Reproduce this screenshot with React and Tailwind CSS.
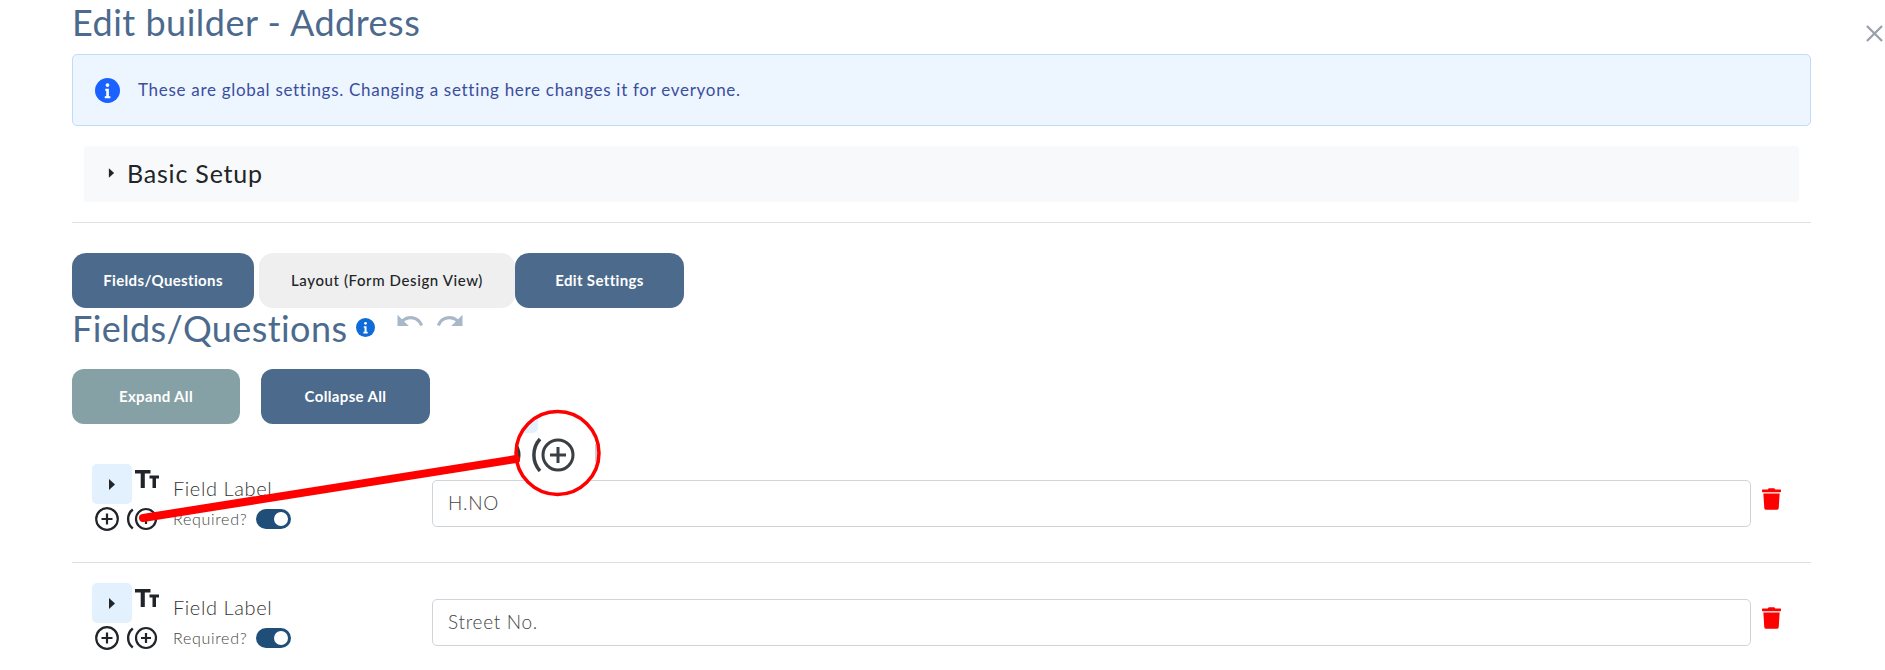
import { FaTrash } from "react-icons/fa";
import { MdUndo, MdRedo } from "react-icons/md";

const FONT = "font-['Lato','Noto_Sans',sans-serif]";

function InfoDot({ className }) {
  return (
    <svg viewBox="0 0 20 20" className={className}>
      <circle cx="10" cy="10" r="10" fill="currentColor" />
      <circle cx="10" cy="5.6" r="1.5" fill="#fff" />
      <path d="M8.2 8.6h2.9v6h1.2v1.6H7.8v-1.6h1.2v-4.400H8.200z" fill="#fff" />
    </svg>
  );
}

function Caret({ className }) {
  return (
    <svg viewBox="0 0 8 12" className={className}>
      <path d="M1 0.500L7 6L1 11.500z" fill="currentColor" />
    </svg>
  );
}

function TextSizeIcon() {
  return (
    <svg viewBox="0 0 24 18" className="w-6 h-[18px] text-[#212529] ml-[3px] mt-[6px] shrink-0">
      <path fill="currentColor" d="M0 0h15.500v3.500H9.800V18H5.700V3.500H0z" />
      <path fill="currentColor" d="M14.500 5.500H24v3h-3V18h-3.500V8.500h-3z" />
    </svg>
  );
}

function PlusCircle() {
  return (
    <svg viewBox="0 0 24 24" className="w-6 h-6 text-[#212529] shrink-0 ml-[3px]">
      <circle cx="12" cy="12" r="10.800" fill="none" stroke="currentColor" strokeWidth="2.200" />
      <path d="M12 6.500v11M6.500 12h11" fill="none" stroke="currentColor" strokeWidth="2.200" />
    </svg>
  );
}

function PlusRipple() {
  return (
    <svg viewBox="0 0 32 24" className="w-8 h-6 text-[#212529] shrink-0 ml-[7px]">
      <path d="M6.800 2.500 A12 12 0 0 0 6.800 21.500" fill="none" stroke="currentColor" strokeWidth="2.400" />
      <circle cx="20" cy="12" r="10" fill="none" stroke="currentColor" strokeWidth="2.200" />
      <path d="M20 7v10M15 12h10" fill="none" stroke="currentColor" strokeWidth="2.200" />
    </svg>
  );
}

function FieldRow({ placeholder }) {
  return (
    <div className="flex h-[98px]">
      <div className="w-[360px] pl-5 shrink-0">
        <div className="flex">
          <div className="w-10 h-10 rounded-[5px] bg-[#e3f0fd] flex items-center justify-center text-[#212529]">
            <Caret className="w-[8px] h-[13px]" />
          </div>
          <TextSizeIcon />
          <span className="ml-[14px] mt-[13px] text-[20px] leading-[22px] text-[#333] font-light tracking-[0.6px]">Field Label</span>
        </div>
        <div className="flex items-center mt-[3px] h-6">
          <PlusCircle />
          <PlusRipple />
          <span className="ml-[15px] text-[16px] leading-5 text-[#444] font-light tracking-[0.7px]">Required?</span>
          <div className="ml-[9px] w-[35px] h-5 rounded-full bg-[#1f4e79] flex items-center justify-end pr-[3px]">
            <div className="w-[14px] h-[14px] rounded-full bg-white" />
          </div>
        </div>
      </div>
      <div className="flex-1 mt-4 h-[47px] border border-[#ced4da] rounded-[5px] flex items-center px-[15px] text-[19px] text-[#444] font-light tracking-[0.7px]">
        {placeholder}
      </div>
      <div className="w-[60px] pl-[11px] pt-6 shrink-0">
        <FaTrash className="w-[19px] h-[22px] text-[#ff0000]" />
      </div>
    </div>
  );
}

function Callout() {
  return (
    <svg viewBox="0 0 1885 670" className="absolute left-0 top-0 w-[1885px] h-[670px] pointer-events-none">
      <defs>
        <clipPath id="lens">
          <circle cx="557.500" cy="453" r="41" />
        </clipPath>
      </defs>
      <circle cx="557.500" cy="453" r="41" fill="#fff" />
      <g clipPath="url(#lens)">
        <rect x="500" y="400" width="38" height="33" rx="5" fill="#e3f0fd" />
        <circle cx="501" cy="455" r="18" fill="none" stroke="#333" strokeWidth="3" />
        <rect x="595" y="444" width="3" height="18" fill="#ccc" />
      </g>
      <path d="M540 439 A24 24 0 0 0 540 471" fill="none" stroke="#3a3f44" strokeWidth="3.500" />
      <circle cx="558" cy="455" r="15" fill="none" stroke="#3a3f44" strokeWidth="3" />
      <path d="M558 447v16M550 455h16" fill="none" stroke="#3a3f44" strokeWidth="3" />
      <circle cx="557.500" cy="453" r="41.500" fill="none" stroke="#ff0000" strokeWidth="3.500" />
      <line x1="143" y1="518" x2="516" y2="459" stroke="#ff0000" strokeWidth="8" strokeLinecap="round" />
    </svg>
  );
}

export default function App() {
  return (
    <div className={`${FONT} relative h-[670px] overflow-hidden bg-white pl-[72px] pr-[74px]`}>
      <h1 className="text-[#4c6a8d] text-[36px] leading-[44px] font-normal tracking-[0.5px]">Edit builder - Address</h1>

      <div className="mt-[10px] h-[72px] rounded-[5px] border border-[#bfdbfe] bg-[#edf5ff] flex items-center pl-[22px] text-[#3a4ea0]">
        <InfoDot className="w-[25px] h-[25px] text-[#1a62ff]" />
        <span className="ml-[18px] text-[17px] tracking-[0.7px] font-normal">These are global settings. Changing a setting here changes it for everyone.</span>
      </div>

      <div className="mt-5 mx-[12px] h-[56px] rounded-[3px] bg-[#f8f9fa] flex items-center pl-6 text-[#212529]">
        <Caret className="w-[7px] h-[12px] mb-[2px]" />
        <span className="ml-[12px] text-[25px] tracking-[0.8px] font-normal">Basic Setup</span>
      </div>

      <hr className="mt-5 border-[#e0e0e0]" />

      <div className="mt-[30px] flex h-[55px] text-[15px] font-bold tracking-[0.35px]">
        <button className="w-[182px] rounded-[14px] bg-[#4c6a8c] text-white">Fields/Questions</button>
        <button className="ml-[5px] w-[256px] rounded-[14px] bg-[#efefef] text-[#212529] font-medium tracking-[0.6px]">Layout (Form Design View)</button>
        <button className="w-[169px] rounded-[14px] bg-[#4c6a8c] text-white">Edit Settings</button>
      </div>

      <div className="flex h-[44px]">
        <h2 className="text-[#4c6a8d] text-[36px] leading-[40px] font-normal tracking-[0.4px]">Fields/Questions</h2>
        <InfoDot className="ml-[9px] mt-[10px] w-[19px] h-[19px] text-[#0f6bd7]" />
        <MdUndo className="ml-[20px] -mt-[2px] text-[#a9b8c9]" size={30} />
        <MdRedo className="ml-[10px] -mt-[2px] text-[#a9b8c9]" size={30} />
      </div>

      <div className="mt-[17px] flex h-[55px] text-[15px] font-bold text-white tracking-[0.35px]">
        <button className="w-[168px] rounded-[12px] bg-[#86a1a6]">Expand All</button>
        <button className="ml-[21px] w-[169px] rounded-[12px] bg-[#4c6a8c]">Collapse All</button>
      </div>

      <div className="mt-10">
        <FieldRow placeholder="H.NO" />
        <hr className="border-[#e0e0e0] mb-5" />
        <FieldRow placeholder="Street No." />
      </div>

      <svg viewBox="0 0 18 18" className="absolute right-[2px] top-[25px] w-[17px] h-[17px] text-[#9aa0a9]">
        <path d="M1 1L17 17M17 1L1 17" stroke="currentColor" strokeWidth="2.400" fill="none" />
      </svg>

      <Callout />
    </div>
  );
}
